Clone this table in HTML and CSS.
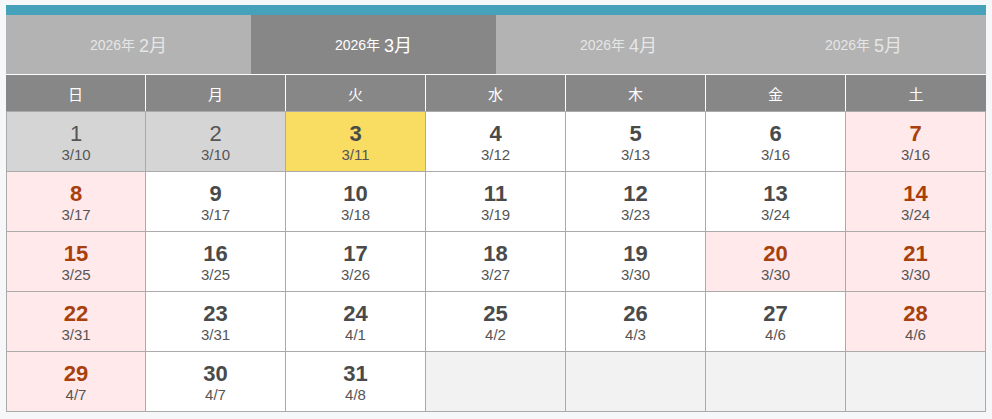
FILE: index.html
```html
<!DOCTYPE html>
<html lang="ja">
<head>
<meta charset="utf-8">
<title>カレンダー</title>
<link rel="stylesheet" href="styles.css">
</head>
<body>
<div class="cal">
  <div class="bar"></div>
  <div class="tabs">
    <div class="tab"><span class="y">2026年</span> <span class="m">2月</span></div>
    <div class="tab active"><span class="y">2026年</span> <span class="m">3月</span></div>
    <div class="tab"><span class="y">2026年</span> <span class="m">4月</span></div>
    <div class="tab"><span class="y">2026年</span> <span class="m">5月</span></div>
  </div>
  <div class="head">
    <div class="wd">日</div><div class="wd">月</div><div class="wd">火</div><div class="wd">水</div><div class="wd">木</div><div class="wd">金</div><div class="wd">土</div>
  </div>
  <div class="grid">
    <div class="c past"><span class="n">1</span><span class="d">3/10</span></div>
    <div class="c past"><span class="n">2</span><span class="d">3/10</span></div>
    <div class="c today"><span class="n">3</span><span class="d">3/11</span></div>
    <div class="c"><span class="n">4</span><span class="d">3/12</span></div>
    <div class="c"><span class="n">5</span><span class="d">3/13</span></div>
    <div class="c"><span class="n">6</span><span class="d">3/16</span></div>
    <div class="c off"><span class="n">7</span><span class="d">3/16</span></div>

    <div class="c off"><span class="n">8</span><span class="d">3/17</span></div>
    <div class="c"><span class="n">9</span><span class="d">3/17</span></div>
    <div class="c"><span class="n">10</span><span class="d">3/18</span></div>
    <div class="c"><span class="n">11</span><span class="d">3/19</span></div>
    <div class="c"><span class="n">12</span><span class="d">3/23</span></div>
    <div class="c"><span class="n">13</span><span class="d">3/24</span></div>
    <div class="c off"><span class="n">14</span><span class="d">3/24</span></div>

    <div class="c off"><span class="n">15</span><span class="d">3/25</span></div>
    <div class="c"><span class="n">16</span><span class="d">3/25</span></div>
    <div class="c"><span class="n">17</span><span class="d">3/26</span></div>
    <div class="c"><span class="n">18</span><span class="d">3/27</span></div>
    <div class="c"><span class="n">19</span><span class="d">3/30</span></div>
    <div class="c off"><span class="n">20</span><span class="d">3/30</span></div>
    <div class="c off"><span class="n">21</span><span class="d">3/30</span></div>

    <div class="c off"><span class="n">22</span><span class="d">3/31</span></div>
    <div class="c"><span class="n">23</span><span class="d">3/31</span></div>
    <div class="c"><span class="n">24</span><span class="d">4/1</span></div>
    <div class="c"><span class="n">25</span><span class="d">4/2</span></div>
    <div class="c"><span class="n">26</span><span class="d">4/3</span></div>
    <div class="c"><span class="n">27</span><span class="d">4/6</span></div>
    <div class="c off"><span class="n">28</span><span class="d">4/6</span></div>

    <div class="c off"><span class="n">29</span><span class="d">4/7</span></div>
    <div class="c"><span class="n">30</span><span class="d">4/7</span></div>
    <div class="c"><span class="n">31</span><span class="d">4/8</span></div>
    <div class="c empty"></div>
    <div class="c empty"></div>
    <div class="c empty"></div>
    <div class="c empty"></div>
  </div>
</div>
</body>
</html>
```
FILE: styles.css
```css
* { box-sizing: border-box; }
html, body { margin: 0; padding: 0; }
body {
  background: #f5f7f8;
  font-family: "Liberation Sans", Arial, "Noto Sans CJK JP", sans-serif;
}
.cal {
  width: 980px;
  margin: 5px 0 0 6px;
}
.bar {
  height: 10px;
  background: #46a2ba;
}
.tabs {
  display: grid;
  grid-template-columns: repeat(4, 1fr);
  height: 60px;
  border-bottom: 1px solid #fff;
}
.tab {
  background: #b3b3b3;
  color: #e6e6e6;
  display: flex;
  align-items: center;
  justify-content: center;
  gap: 4px;
  padding-bottom: 2px;
}
.tab.active {
  background: #878787;
  color: #fff;
}
.tab .y { font-size: 14px; }
.tab .m { font-size: 18px; }
.head {
  display: grid;
  grid-template-columns: repeat(7, 140px);
  height: 37px;
  background: #878787;
  border-bottom: 1px solid #aaa;
}
.wd {
  color: #fff;
  font-size: 15px;
  display: flex;
  align-items: center;
  justify-content: center;
  border-right: 1px solid #fff;
}
.wd:last-child { border-right: none; }
.grid {
  display: grid;
  grid-template-columns: repeat(7, 140px);
  grid-auto-rows: 60px;
}
.c {
  background: #fff;
  border-right: 1px solid #aaa;
  border-bottom: 1px solid #aaa;
  display: flex;
  flex-direction: column;
  align-items: center;
  justify-content: center;
  color: #4a4a4a;
}
.c:nth-child(7n+1) { border-left: 1px solid #aaa; }
.n {
  font-size: 22px;
  font-weight: bold;
  line-height: 25px;
  color: #4a4a4a;
}
.d {
  font-size: 15px;
  line-height: 17px;
  color: #555;
}
.past { background: #d5d5d5; }
.past .n { font-weight: normal; color: #555; }
.today { background: #f9dd63; }
.off { background: #ffe9ea; }
.off .n { color: #a8400c; }
.empty { background: #f2f2f2; }
```
